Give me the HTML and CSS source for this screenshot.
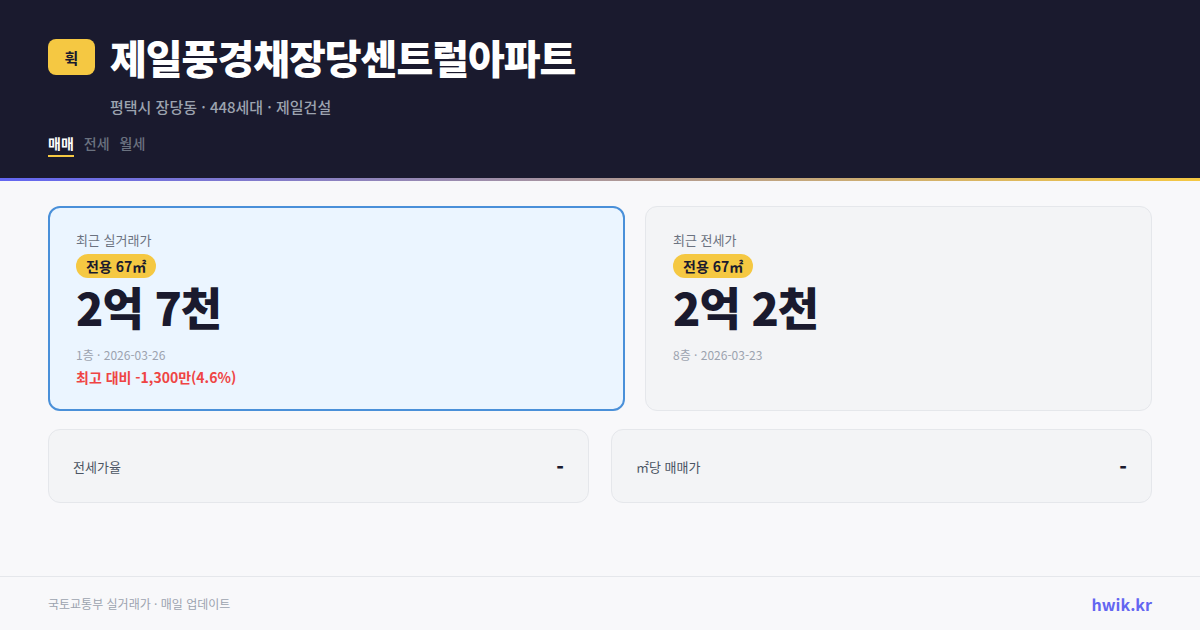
FILE: index.html
```html
<!DOCTYPE html>
<html lang="ko">
<head>
    <meta charset="UTF-8">
    <title>제일풍경채장당센트럴아파트</title>
    <link rel="stylesheet" href="styles.css">
</head>
<body>
    <div class="page">
        <div class="header">
            <div class="title-row">
                <div class="logo">휙</div>
                <div class="title">제일풍경채장당센트럴아파트</div>
            </div>
            <div class="subtitle">평택시 장당동 · 448세대 · 제일건설</div>
            <div class="tabs">
                <div class="tab active">매매</div>
                <div class="tab">전세</div>
                <div class="tab">월세</div>
            </div>
        </div>
        <div class="accent-line"></div>

        <div class="main">
            <div class="price-row">
                <div class="card card-main">
                    <div class="card-label">최근 실거래가</div>
                    <div class="area-badge">전용 67㎡</div>
                    <div class="price">2억 7천</div>
                    <div class="meta">1층 · 2026-03-26</div>
                    <div class="diff">최고 대비 -1,300만(4.6%)</div>
                </div>
                <div class="card">
                    <div class="card-label">최근 전세가</div>
                    <div class="area-badge">전용 67㎡</div>
                    <div class="price">2억 2천</div>
                    <div class="meta">8층 · 2026-03-23</div>
                </div>
            </div>
            <div class="stat-row">
                <div class="stat">
                    <div class="stat-label">전세가율</div>
                    <div class="stat-value">-</div>
                </div>
                <div class="stat">
                    <div class="stat-label">㎡당 매매가</div>
                    <div class="stat-value">-</div>
                </div>
            </div>
        </div>

        <div class="footer">
            <div class="source">국토교통부 실거래가 · 매일 업데이트</div>
            <div class="brand">hwik.kr</div>
        </div>
    </div>
</body>
</html>
```

FILE: styles.css
```css
* { box-sizing: border-box; }
body {
    margin: 0;
    background: #f8f8fa;
    font-family: "Noto Sans CJK KR", "Noto Sans", sans-serif;
    color: #1a1a2e;
}
.page {
    display: flex;
    flex-direction: column;
    height: 630px;
}

/* header */
.header {
    background: #1a1a2e;
    padding: 33px 48px 21px;
}
.title-row {
    display: flex;
    align-items: center;
    gap: 15px;
    height: 48px;
}
.logo {
    width: 47px;
    height: 36px;
    border-radius: 8px;
    background: #f5c842;
    color: #1a1a2e;
    font-size: 15px;
    font-weight: 700;
    display: flex;
    align-items: center;
    justify-content: center;
}
.title {
    color: #fff;
    font-size: 40px;
    font-weight: 900;
    letter-spacing: -1px;
    line-height: 48px;
}
.subtitle {
    margin: 16px 0 0 62px;
    color: #9ca3af;
    font-size: 15px;
    font-weight: 500;
    line-height: 20px;
}
.tabs {
    display: flex;
    gap: 10px;
    margin-top: 16px;
}
.tab {
    color: #6b7280;
    font-size: 14px;
    font-weight: 500;
    line-height: 20px;
    padding-bottom: 2px;
    border-bottom: 2px solid transparent;
}
.tab.active {
    color: #fff;
    font-weight: 700;
    border-bottom-color: #f5c842;
}
.accent-line {
    height: 3px;
    background: linear-gradient(90deg, #6366f1, #f5c842);
}

/* content */
.main {
    flex: 1;
    padding: 25px 48px 0;
}
.price-row {
    display: grid;
    grid-template-columns: 577px 1fr;
    gap: 20px;
}
.card {
    background: #f3f4f6;
    border: 1px solid #e5e7eb;
    border-radius: 12px;
    padding: 24px 27px 22px;
}
.card-main {
    background: #ebf5ff;
    border: 2px solid #4a90d9;
    padding: 23px 26px 22px;
}
.card-label {
    font-size: 13px;
    line-height: 18px;
    color: #6b7280;
}
.area-badge {
    display: inline-block;
    margin-top: 5px;
    padding: 0 10px;
    height: 24px;
    line-height: 24px;
    border-radius: 12px;
    background: #f5c842;
    color: #1a1a2e;
    font-size: 14px;
    font-weight: 700;
}
.price {
    margin-top: 5px;
    font-size: 45px;
    font-weight: 900;
    letter-spacing: -1px;
    line-height: 48px;
    color: #1a1a2e;
}
.meta {
    margin-top: 15px;
    font-size: 12px;
    line-height: 18px;
    color: #9ca3af;
}
.diff {
    margin-top: 3px;
    font-size: 14px;
    font-weight: 700;
    line-height: 20px;
    color: #ef4444;
}

.stat-row {
    display: grid;
    grid-template-columns: 1fr 1fr;
    gap: 22px;
    margin-top: 18px;
}
.stat {
    height: 74px;
    display: flex;
    align-items: center;
    justify-content: space-between;
    padding: 0 24px;
    background: #f3f4f6;
    border: 1px solid #e5e7eb;
    border-radius: 12px;
}
.stat-label {
    font-size: 13px;
    color: #4b5563;
}
.stat-value {
    font-size: 20px;
    font-weight: 900;
    color: #1a1a2e;
}

/* footer */
.footer {
    height: 54px;
    border-top: 1px solid #e5e7eb;
    padding: 0 48px;
    display: flex;
    align-items: center;
    justify-content: space-between;
}
.source {
    font-size: 12px;
    color: #9ca3af;
}
.brand {
    font-size: 16px;
    font-weight: 700;
    color: #6366f1;
}
```
